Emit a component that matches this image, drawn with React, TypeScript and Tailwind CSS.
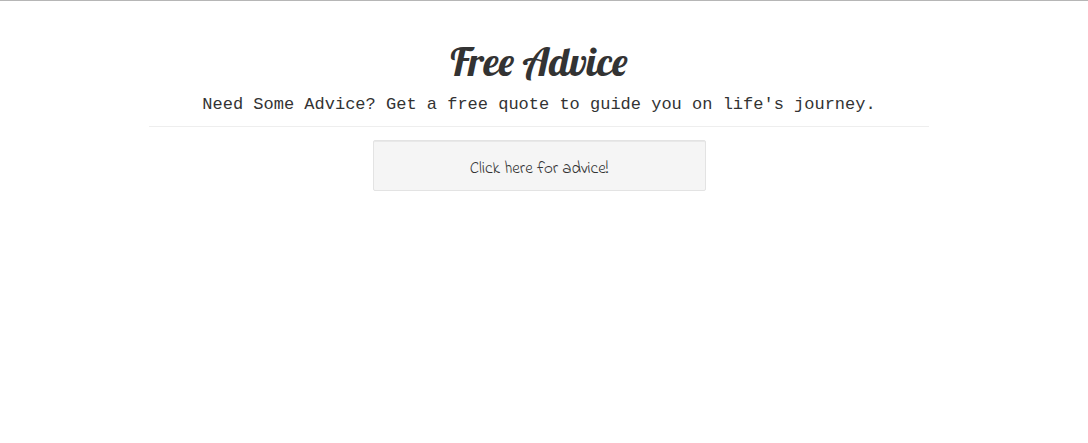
export default function App() {
  return (
    <div className="min-h-screen border-t border-[#b6b6b6] bg-white pr-2.5 text-[#333]">
      <main className="mx-auto flex max-w-[780px] flex-col items-center text-center">
        <h1 className="mt-10 font-['Lobster','Liberation_Serif',serif] text-[40px] leading-10 font-medium">
          Free Advice
        </h1>
        <p className="w-full border-b border-[#eee] pt-3.5 pb-[11px] font-['Liberation_Mono',monospace] text-[17px] leading-5">
          Need Some Advice? Get a free quote to guide you on life's journey.
        </p>
        <button
          type="button"
          className="mt-[13px] w-full max-w-[333px] rounded-xs border border-[#e3e3e3] bg-[#f5f5f5] px-4 pt-[19px] pb-[13px] font-['Indie_Flower','Open_Sans',cursive] text-[17px] leading-[17px] inset-shadow-2xs"
        >
          Click here for advice!
        </button>
      </main>
    </div>
  );
}
